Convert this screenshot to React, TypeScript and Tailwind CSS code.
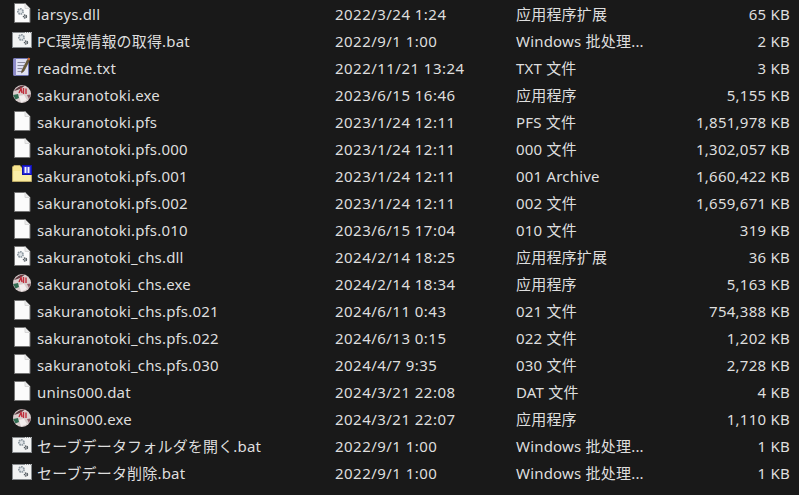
import React from 'react';

type Kind = 'dll' | 'bat' | 'txt' | 'exe' | 'file' | 'archive';

type Row = { name: string; date: string; type: string; size: string; kind: Kind };

const rows: Row[] = [
  { name: 'iarsys.dll', date: '2022/3/24 1:24', type: '应用程序扩展', size: '65 KB', kind: 'dll' },
  { name: 'PC環境情報の取得.bat', date: '2022/9/1 1:00', type: 'Windows 批处理...', size: '2 KB', kind: 'bat' },
  { name: 'readme.txt', date: '2022/11/21 13:24', type: 'TXT 文件', size: '3 KB', kind: 'txt' },
  { name: 'sakuranotoki.exe', date: '2023/6/15 16:46', type: '应用程序', size: '5,155 KB', kind: 'exe' },
  { name: 'sakuranotoki.pfs', date: '2023/1/24 12:11', type: 'PFS 文件', size: '1,851,978 KB', kind: 'file' },
  { name: 'sakuranotoki.pfs.000', date: '2023/1/24 12:11', type: '000 文件', size: '1,302,057 KB', kind: 'file' },
  { name: 'sakuranotoki.pfs.001', date: '2023/1/24 12:11', type: '001 Archive', size: '1,660,422 KB', kind: 'archive' },
  { name: 'sakuranotoki.pfs.002', date: '2023/1/24 12:11', type: '002 文件', size: '1,659,671 KB', kind: 'file' },
  { name: 'sakuranotoki.pfs.010', date: '2023/6/15 17:04', type: '010 文件', size: '319 KB', kind: 'file' },
  { name: 'sakuranotoki_chs.dll', date: '2024/2/14 18:25', type: '应用程序扩展', size: '36 KB', kind: 'dll' },
  { name: 'sakuranotoki_chs.exe', date: '2024/2/14 18:34', type: '应用程序', size: '5,163 KB', kind: 'exe' },
  { name: 'sakuranotoki_chs.pfs.021', date: '2024/6/11 0:43', type: '021 文件', size: '754,388 KB', kind: 'file' },
  { name: 'sakuranotoki_chs.pfs.022', date: '2024/6/13 0:15', type: '022 文件', size: '1,202 KB', kind: 'file' },
  { name: 'sakuranotoki_chs.pfs.030', date: '2024/4/7 9:35', type: '030 文件', size: '2,728 KB', kind: 'file' },
  { name: 'unins000.dat', date: '2024/3/21 22:08', type: 'DAT 文件', size: '4 KB', kind: 'file' },
  { name: 'unins000.exe', date: '2024/3/21 22:07', type: '应用程序', size: '1,110 KB', kind: 'exe' },
  { name: 'セーブデータフォルダを開く.bat', date: '2022/9/1 1:00', type: 'Windows 批处理...', size: '1 KB', kind: 'bat' },
  { name: 'セーブデータ削除.bat', date: '2022/9/1 1:00', type: 'Windows 批处理...', size: '1 KB', kind: 'bat' },
];

const Gears = ({ x, y }: { x: number; y: number }) => (
  <g transform={`translate(${x} ${y})`}>
    <circle cx="3.5" cy="3.5" r="2.6" fill="#dfe3e6" stroke="#8f9aa2" strokeWidth="1.8" strokeDasharray="1.6 0.7" />
    <circle cx="8" cy="8.5" r="1.5" fill="#b9bdc0" stroke="#4f565b" strokeWidth="1.4" strokeDasharray="1.2 0.6" />
  </g>
);

const PageShape = () => (
  <>
    <path d="M2.5 1.5H13L18 6.5V20.5H2.5Z" fill="#fbfbfb" stroke="#747474" strokeWidth="1" />
    <path d="M13 1.5V6.5H18" fill="#ececec" stroke="#d6d6d6" strokeWidth="1" />
  </>
);

const FileIcon = ({ kind }: { kind: Kind }) => {
  if (kind === 'file') {
    return (
      <svg width="20" height="25" viewBox="0 0 20 25">
        <PageShape />
      </svg>
    );
  }
  if (kind === 'dll') {
    return (
      <svg width="20" height="25" viewBox="0 0 20 25">
        <PageShape />
        <Gears x={5} y={6} />
      </svg>
    );
  }
  if (kind === 'bat') {
    return (
      <svg width="20" height="25" viewBox="0 0 20 25">
        <rect x="0.5" y="3.5" width="19" height="15" fill="#f2f3f3" stroke="#85898c" strokeWidth="1" />
        <path d="M13 3.5H19.5" stroke="#dfe1e2" strokeWidth="1" strokeDasharray="1 1" />
        <Gears x={6} y={5} />
      </svg>
    );
  }
  if (kind === 'txt') {
    return (
      <svg width="20" height="25" viewBox="0 0 20 25">
        <rect x="1.5" y="2.5" width="15" height="17" rx="1" fill="#dfe0f2" stroke="#6d72b0" strokeWidth="1" />
        <rect x="1.5" y="2.5" width="2.5" height="17" fill="#8f8cc9" />
        <path d="M5.5 6.5H13M5.5 9.5H12M5.5 12.5H10M5.5 15.5H10" stroke="#8a8a9e" strokeWidth="1" />
        <path d="M15.5 3.5L10 14L9.5 17L12 15L17.5 4.5Z" fill="#6a5a38" stroke="#4a3a22" strokeWidth="0.5" />
        <path d="M15.5 3.5L17.5 4.5L18.2 2.6L16.4 1.6Z" fill="#d4682e" />
      </svg>
    );
  }
  if (kind === 'archive') {
    return (
      <svg width="20" height="25" viewBox="0 0 20 25">
        <path d="M0.5 5V3L2 1.5H8L10 4H19.5V17.5H0.5Z" fill="#f7e58f" stroke="#bcaa66" strokeWidth="1" />
        <path d="M1.5 7H18.5V16.5H1.5Z" fill="#fbeea8" />
        <rect x="10.5" y="1.5" width="9" height="9" fill="#2a2ad8" stroke="#1010b0" strokeWidth="1" />
        <rect x="12.5" y="3" width="2" height="6" fill="#f4f4ff" />
        <rect x="15.5" y="3" width="2" height="6" fill="#f4f4ff" />
      </svg>
    );
  }
  return (
    <svg width="20" height="25" viewBox="0 0 20 25">
      <circle cx="10" cy="11" r="9" fill="#d9cdcd" />
      <path d="M2 8C5 4 9 2 13 2.5C10 5 7 7 2 8Z" fill="#5f3a40" />
      <path d="M7 10L9 5.5L10 10M11.5 5V11M14 5.5V11" stroke="#c02c3a" strokeWidth="1.4" fill="none" />
      <path d="M1.2 12L6 11L7 15L3.5 16.5Z" fill="#2f6b50" />
      <path d="M7 13L12 12L15 17L9 19.5Z" fill="#f3eeee" />
      <path d="M15 12L18.8 11.5L17 16Z" fill="#8f5f68" />
    </svg>
  );
};

const App: React.FC = () => {
  return (
    <div
      className="w-[799px] h-[495px] overflow-hidden bg-[#191919] pt-[1px] text-[15px] text-[#dedede]"
      style={{ fontFamily: '"Noto Sans", "Noto Sans CJK SC", sans-serif' }}
    >
      {rows.map(row => (
        <div key={row.name} className="flex items-center h-[27px] leading-[27px] whitespace-nowrap">
          <div className="w-[37px] pl-[12px] flex items-center shrink-0">
            <FileIcon kind={row.kind} />
          </div>
          <div className="w-[298px] shrink-0 tracking-[0.17px]">{row.name}</div>
          <div className="w-[181px] shrink-0 tracking-[0.47px]">{row.date}</div>
          <div className="w-[130px] shrink-0 tracking-[0.2px]">{row.type}</div>
          <div className="w-[144px] shrink-0 text-right tracking-[0.25px]">{row.size}</div>
        </div>
      ))}
    </div>
  );
};

export default App;
